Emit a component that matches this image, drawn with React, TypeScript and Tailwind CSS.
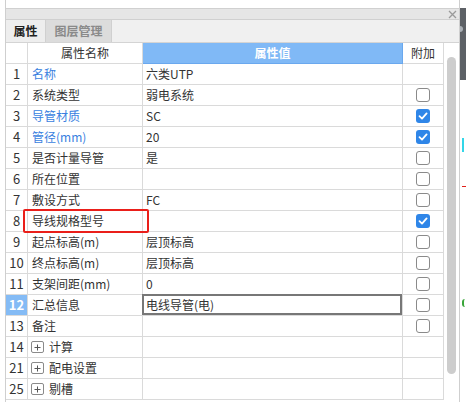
import React from "react";

type Row = {
  n: string;
  name: string;
  blue?: boolean;
  value?: string;
  cb?: "on" | "off";
  plus?: boolean;
  sel?: boolean;
};

const rows: Row[] = [
  { n: "1", name: "名称", blue: true, value: "六类UTP" },
  { n: "2", name: "系统类型", value: "弱电系统", cb: "off" },
  { n: "3", name: "导管材质", blue: true, value: "SC", cb: "on" },
  { n: "4", name: "管径(mm)", blue: true, value: "20", cb: "on" },
  { n: "5", name: "是否计量导管", value: "是", cb: "off" },
  { n: "6", name: "所在位置", value: "", cb: "off" },
  { n: "7", name: "敷设方式", value: "FC", cb: "off" },
  { n: "8", name: "导线规格型号", value: "", cb: "on" },
  { n: "9", name: "起点标高(m)", value: "层顶标高", cb: "off" },
  { n: "10", name: "终点标高(m)", value: "层顶标高", cb: "off" },
  { n: "11", name: "支架间距(mm)", value: "0", cb: "off" },
  { n: "12", name: "汇总信息", value: "电线导管(电)", cb: "off", sel: true },
  { n: "13", name: "备注", value: "", cb: "off" },
  { n: "14", name: "计算", plus: true },
  { n: "21", name: "配电设置", plus: true },
  { n: "25", name: "剔槽", plus: true },
];

function Checkbox({ on }: { on: boolean }) {
  if (on) {
    return (
      <div className="w-[14px] h-[14px] rounded-[3px] bg-[#2f86e8] flex items-center justify-center">
        <svg width="10" height="10" viewBox="0 0 10 10">
          <polyline points="1.5,5.2 4,7.6 8.6,2.4" fill="none" stroke="#fff" strokeWidth="1.8" strokeLinecap="round" strokeLinejoin="round" />
        </svg>
      </div>
    );
  }
  return <div className="w-[14px] h-[14px] rounded-[3px] border border-[#8a8a8a] bg-white" />;
}

export default function App() {
  return (
    <div
      className="w-[466px] h-[402px] overflow-hidden bg-white flex relative text-[12px] text-[#333]"
      style={{ fontFamily: '"Noto Sans CJK SC", "Noto Sans", sans-serif' }}
    >
      <div className="w-[5px] shrink-0" />
      <div className="w-[455px] shrink-0 border-l border-r border-[#cfcfcf] flex flex-col">
        <div className="h-[8px] shrink-0" />
        <div className="h-[12px] shrink-0 border-t border-b border-[#d0d0d0] bg-[#e6e6e6] flex items-center justify-end pr-[2px]">
          <svg width="9" height="9" viewBox="0 0 9 9">
            <path d="M1 1L8 8M8 1L1 8" stroke="#9a9a9a" strokeWidth="1.3" />
          </svg>
        </div>
        <div className="h-[23px] shrink-0 border-b border-[#d4d4d4] bg-[#f0f0f0] flex">
          <div className="w-[40px] border-r border-[#d0d0d0] bg-[#eeeeee] flex items-center justify-center font-bold text-[#222]">
            属性
          </div>
          <div className="w-[66px] border-r border-[#d0d0d0] bg-[#dcdcdc] flex items-center justify-center font-bold text-[#8a8a8a]">
            图层管理
          </div>
        </div>
        <div className="flex flex-1 min-h-0">
          <div className="w-[438px] shrink-0 flex flex-col">
            <div className="flex h-[21px] shrink-0">
              <div className="w-[22px] border-r border-b border-[#dadada] bg-white" />
              <div className="w-[115px] border-r border-b border-[#dadada] bg-white flex items-center justify-center">
                属性名称
              </div>
              <div className="w-[260px] border-r border-b border-[#6aa8ee] bg-[#80b9f6] flex items-center justify-center text-white font-bold">
                属性值
              </div>
              <div className="w-[41px] border-r border-b border-[#dadada] bg-white flex items-center justify-center">
                附加
              </div>
            </div>
            {rows.map((r) => (
              <div key={r.n} className="flex h-[21px] shrink-0">
                <div
                  className={
                    r.sel
                      ? "w-[22px] border-r border-b border-[#dadada] bg-[#84bbf5] text-white font-bold flex items-center justify-center text-[13px]"
                      : "w-[22px] border-r border-b border-[#dadada] flex items-center justify-center text-[13px]"
                  }
                >
                  {r.n}
                </div>
                <div
                  className={
                    r.blue
                      ? "w-[115px] border-r border-b border-[#dadada] flex items-center pl-[4px] text-[#3a7fe0] whitespace-nowrap"
                      : "w-[115px] border-r border-b border-[#dadada] flex items-center pl-[4px] whitespace-nowrap"
                  }
                >
                  {r.plus && (
                    <div className="w-[13px] h-[12px] mr-[5px] ml-[-1px] border border-[#8a8a8a] rounded-[2px] flex items-center justify-center">
                      <svg width="7" height="7" viewBox="0 0 7 7">
                        <path d="M3.5 0.5V6.5M0.5 3.5H6.5" stroke="#555" strokeWidth="1" />
                      </svg>
                    </div>
                  )}
                  {r.name}
                </div>
                <div className="w-[260px] border-r border-b border-[#dadada] flex items-center pl-[3px] relative whitespace-nowrap">
                  {r.value}
                  {r.sel && (
                    <div className="absolute top-[-1px] left-[-1px] right-0 bottom-0 border-2 border-[#777777]" />
                  )}
                </div>
                <div className="w-[41px] border-r border-b border-[#dadada] flex items-center justify-center">
                  {r.cb && <Checkbox on={r.cb === "on"} />}
                </div>
              </div>
            ))}
          </div>
          <div className="w-[15px] shrink-0 pl-[3px] pt-[14px]">
            <div className="w-[9px] h-[317px] rounded-full bg-[#cdcdcd]" />
          </div>
        </div>
      </div>
      <div className="w-[6px] shrink-0 flex flex-col">
        <div className="h-[8px]" />
        <div className="h-[72px] bg-[#5d6166] relative">
          <div className="absolute left-0 top-[18px] w-[3px] h-[6px] rounded-r-full bg-[#aab0b6]" />
        </div>
        <div className="h-[58px]" />
        <div className="ml-[2px] w-[2px] h-[14px] bg-[#33d6e8]" />
        <div className="h-[34px]" />
        <div className="ml-[2px] w-[4px] h-[1px] bg-[#e0201a]" />
        <div className="h-[112px]" />
        <div className="ml-[2px] w-[3px] h-[8px] border-l-2 border-[#3aa63a] rounded-l-full" />
      </div>
      <div className="absolute left-[23px] top-[209px] w-[126px] h-[24px] border-2 border-[#ea1f1a] rounded-[2px]" />
    </div>
  );
}
